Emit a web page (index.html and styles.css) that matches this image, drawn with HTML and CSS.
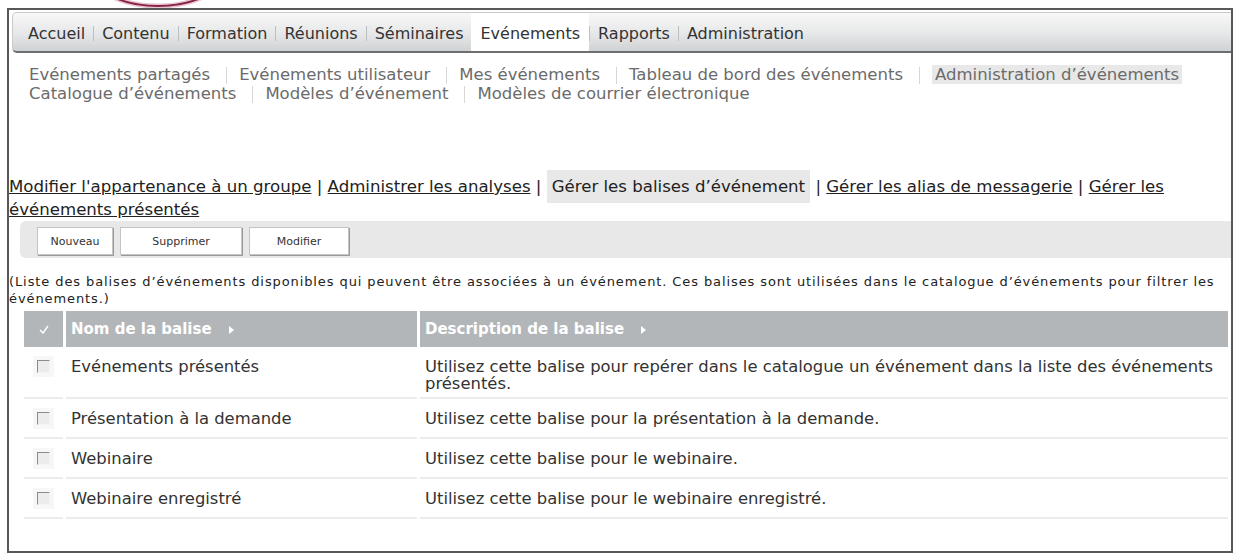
FILE: index.html
```html
<!DOCTYPE html>
<html lang="fr">
<head>
    <meta charset="UTF-8">
    <title>Evénements - Gérer les balises d'événement</title>
    <link rel="stylesheet" href="styles.css">
</head>
<body>
    <!-- bas du logo, coupé par le cadre -->
    <div class="logo-strip">
        <svg width="300" height="8" viewBox="0 0 300 8">
            <ellipse cx="158" cy="-38" rx="74" ry="44" fill="none" stroke="#e9c6d3" stroke-width="5"/>
            <ellipse cx="158" cy="-38" rx="74" ry="44" fill="none" stroke="#8a2446" stroke-width="2"/>
        </svg>
    </div>

    <div class="frame">
        <div class="topnav">
            <a href="#">Accueil</a><span class="tab-sep"></span>
            <a href="#">Contenu</a><span class="tab-sep"></span>
            <a href="#">Formation</a><span class="tab-sep"></span>
            <a href="#">Réunions</a><span class="tab-sep"></span>
            <a href="#">Séminaires</a>
            <a href="#" class="active">Evénements</a><span class="tab-sep"></span>
            <a href="#">Rapports</a><span class="tab-sep"></span>
            <a href="#">Administration</a>
        </div>

        <div class="subnav">
            <div>
                <a href="#">Evénements partagés</a><span class="bar"></span><a href="#">Evénements utilisateur</a><span class="bar"></span><a href="#">Mes événements</a><span class="bar"></span><a href="#">Tableau de bord des événements</a><span class="bar"></span><a href="#" class="current">Administration d’événements</a>
            </div>
            <div>
                <a href="#">Catalogue d’événements</a><span class="bar"></span><a href="#">Modèles d’événement</a><span class="bar"></span><a href="#">Modèles de courrier électronique</a>
            </div>
        </div>

        <div class="admin-links">
            <a href="#">Modifier l'appartenance à un groupe</a> | <a href="#">Administrer les analyses</a> | <span class="current">Gérer les balises d’événement</span> | <a href="#">Gérer les alias de messagerie</a> | <a href="#">Gérer les événements présentés</a>
        </div>

        <div class="toolbar">
            <button class="btn btn-new">Nouveau</button>
            <button class="btn btn-delete">Supprimer</button>
            <button class="btn btn-edit">Modifier</button>
        </div>

        <p class="note">(Liste des balises d’événements disponibles qui peuvent être associées à un événement. Ces balises sont utilisées dans le catalogue d’événements pour filtrer les événements.)</p>

        <table class="grid">
            <colgroup>
                <col class="col-check">
                <col class="col-name">
                <col>
            </colgroup>
            <thead>
                <tr>
                    <th class="check-head">
                        <svg width="10" height="9" viewBox="0 0 10 9"><path d="M1 5 L4 8 L9 1" fill="none" stroke="#fff" stroke-width="1.4"/></svg>
                    </th>
                    <th>Nom de la balise <span class="sort"></span></th>
                    <th>Description de la balise <span class="sort"></span></th>
                </tr>
            </thead>
            <tbody>
                <tr>
                    <td class="check"><span class="box"></span></td>
                    <td>Evénements présentés</td>
                    <td>Utilisez cette balise pour repérer dans le catalogue un événement dans la liste des événements présentés.</td>
                </tr>
                <tr>
                    <td class="check"><span class="box"></span></td>
                    <td>Présentation à la demande</td>
                    <td>Utilisez cette balise pour la présentation à la demande.</td>
                </tr>
                <tr>
                    <td class="check"><span class="box"></span></td>
                    <td>Webinaire</td>
                    <td>Utilisez cette balise pour le webinaire.</td>
                </tr>
                <tr>
                    <td class="check"><span class="box"></span></td>
                    <td>Webinaire enregistré</td>
                    <td>Utilisez cette balise pour le webinaire enregistré.</td>
                </tr>
            </tbody>
        </table>
    </div>
</body>
</html>
```

FILE: styles.css
```css
body {
    margin: 0;
    font-family: "DejaVu Sans", Verdana, sans-serif;
    background-color: #fff;
    color: #333;
}

.logo-strip {
    height: 8px;
    overflow: hidden;
}
.logo-strip svg {
    display: block;
}

.frame {
    margin-left: 7px;
    width: 1226px;
    height: 545px;
    box-sizing: border-box;
    border: 2px solid #585858;
    overflow: hidden;
}

/* onglets principaux */
.topnav {
    display: flex;
    height: 41px;
    box-sizing: border-box;
    margin: 2px 0 0 3px;
    padding: 2px 0 0 7px;
    background: linear-gradient(#f8f8f8, #e6e7e8 55%, #cfd2d4);
    border: 1px solid #cacaca;
    border-right: none;
    border-bottom: 2px solid #6e6e6e;
    border-radius: 5px 0 0 5px;
    font-size: 16px;
}
.topnav a {
    display: flex;
    align-items: center;
    padding: 0 8px;
    color: #333;
    text-decoration: none;
}
.topnav a.active {
    background-color: #fff;
    margin-top: -2px;
    padding: 2px 9px 0;
}
.tab-sep {
    align-self: center;
    width: 1px;
    height: 15px;
    background-color: #bcbfc2;
}

/* sous-menu */
.subnav {
    padding: 12px 0 0 20px;
    font-size: 16.5px;
    line-height: 19px;
}
.subnav a {
    color: #6b6b6b;
    text-decoration: none;
}
.subnav a.current {
    background-color: #e8e8e8;
    padding: 0 3px;
}
.bar {
    display: inline-block;
    width: 1px;
    height: 17px;
    margin: 0 12px 0 16px;
    vertical-align: middle;
    background-color: #d6d6d6;
}

.admin-links {
    margin-top: 72px;
    font-size: 16.6px;
    line-height: 23px;
    color: #222;
}
.admin-links a {
    color: #222;
}
.admin-links .current {
    background-color: #e8e8e8;
    padding: 7px 5px;
}

.toolbar {
    display: flex;
    gap: 7px;
    height: 37px;
    box-sizing: border-box;
    margin-left: 11px;
    padding: 6px 0 0 17px;
    background-color: #e8e8e8;
    border-radius: 6px 0 0 6px;
}
.btn {
    height: 28px;
    font-family: "DejaVu Sans", Verdana, sans-serif;
    font-size: 11px;
    color: #333;
    background-color: #fff;
    border: 1px solid #c4c4c4;
    box-shadow: 1px 1px 0 #9a9a9a;
    padding: 0;
}
.btn-new { width: 76px; }
.btn-delete { width: 122px; }
.btn-edit { width: 100px; }

.note {
    margin: 15px 0 0;
    font-size: 13px;
    letter-spacing: 0.9px;
    line-height: 17px;
    color: #222;
}

/* tableau des balises */
.grid {
    width: 1210px;
    margin: 4px 0 0 12px;
    border-collapse: separate;
    border-spacing: 3px 0;
    table-layout: fixed;
    font-size: 16.4px;
}
.col-check { width: 39px; }
.col-name { width: 351px; }

.grid th {
    height: 36px;
    padding: 0 5px;
    text-align: left;
    font-size: 15px;
    color: #fff;
    font-weight: bold;
    background-color: #b3b6b9;
}
.grid th.check-head {
    text-align: center;
}
.sort {
    display: inline-block;
    margin-left: 12px;
    border-left: 5px solid #fff;
    border-top: 4px solid transparent;
    border-bottom: 4px solid transparent;
}

.grid tbody tr {
    height: 40px;
}
.grid td {
    padding: 11px 5px 5px;
    line-height: 17px;
    vertical-align: top;
    color: #333;
    border-bottom: 2px solid #ececec;
}
.grid td.check {
    padding-left: 0;
    padding-right: 0;
}
.box {
    display: block;
    width: 11px;
    height: 11px;
    margin: 2px auto 0;
    background-color: #ececec;
    border: 1px solid;
    border-color: #8c8c8c #f4f4f4 #f4f4f4 #8c8c8c;
    box-shadow: 0 0 0 4px #f7f7f7;
}
```
